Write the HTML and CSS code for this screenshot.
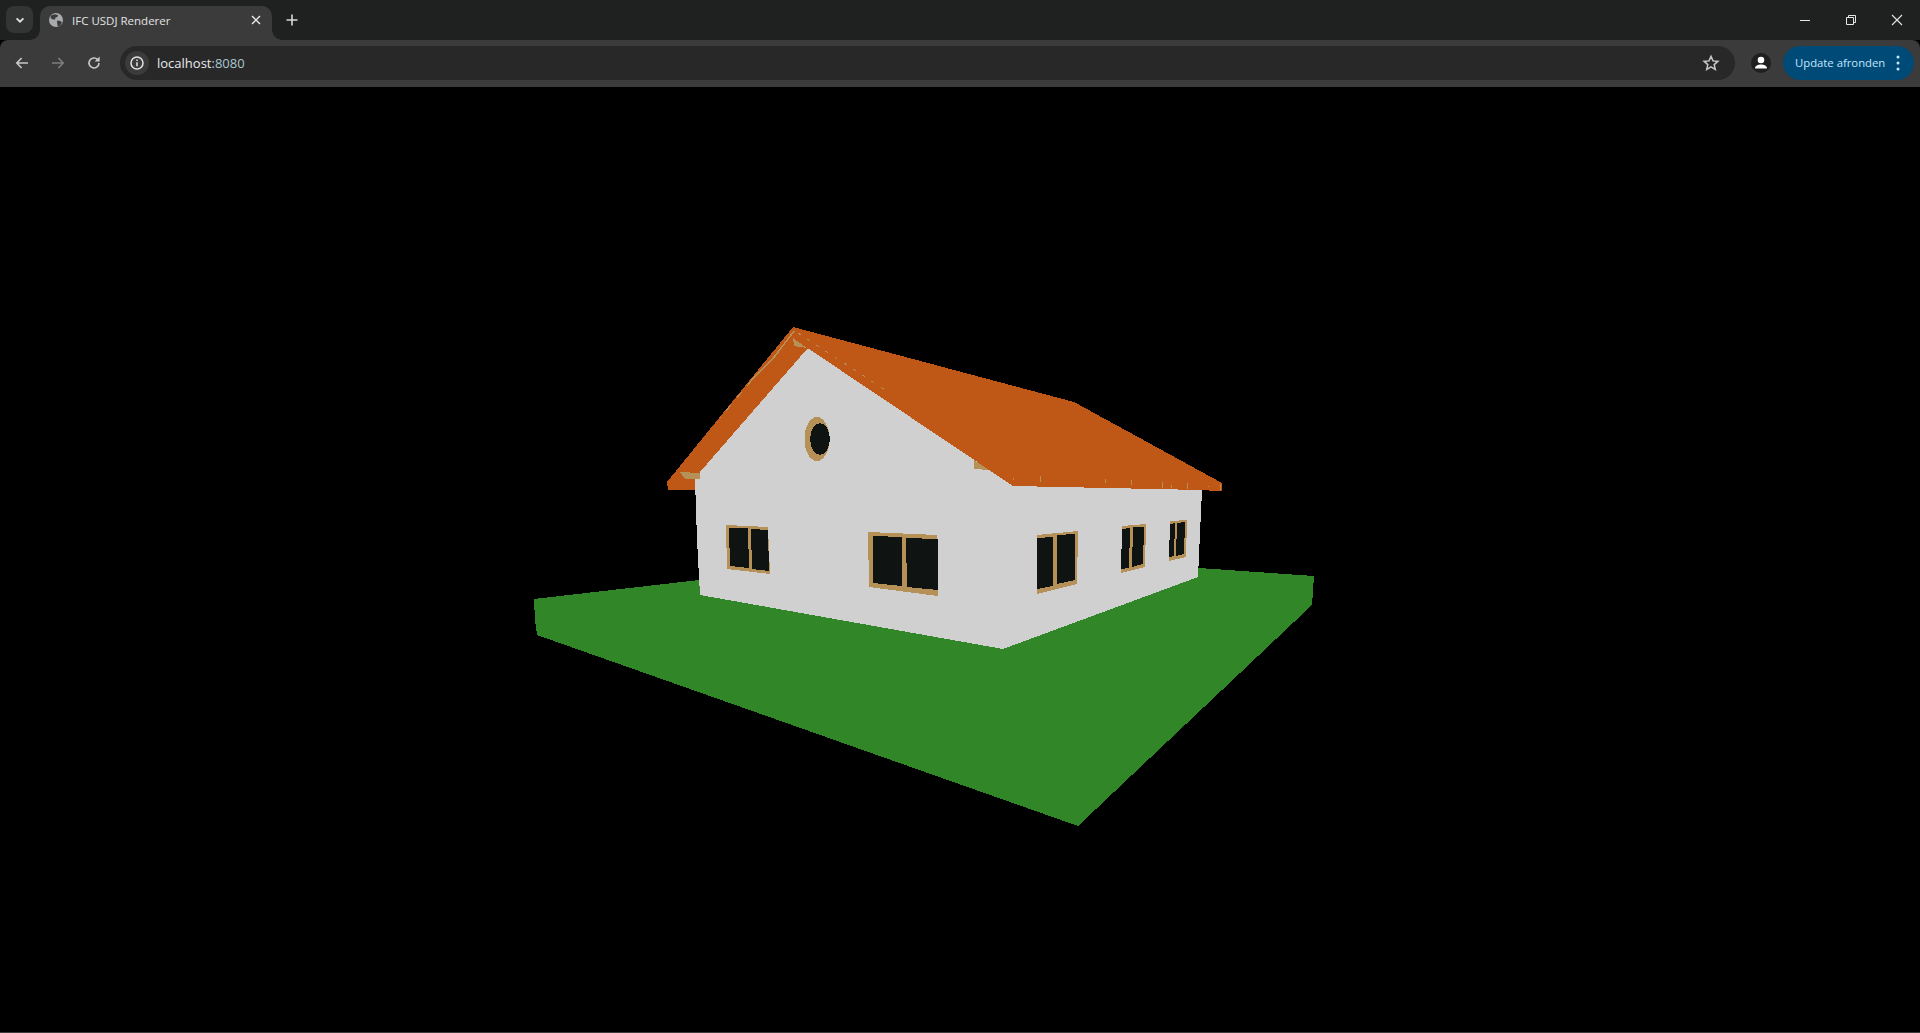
FILE: index.html
```html
<!DOCTYPE html>
<html lang="en">
<head>
<meta charset="utf-8">
<title>IFC USDJ Renderer</title>
<link rel="stylesheet" href="styles.css">
</head>
<body>
<div class="browser">
  <header class="tabstrip">
    <button class="tab-search" aria-label="Search tabs">
      <svg class="icon" width="16" height="16" viewBox="0 0 16 16"><path d="M4.6 6.3 8 9.7l3.400-3.400" fill="none" stroke="#e3e3e3" stroke-width="1.700"/></svg>
    </button>
    <div class="tab">
      <svg class="favicon" width="16" height="16" viewBox="0 0 16 16"><circle cx="8" cy="8" r="7" fill="#a8abad"/><path d="M3 3.500 6.500 2.200 10 3 9.400 5 7.500 5.500 7 7.400 4.800 7.600 2.500 6ZM9 8.500l3.400.6 1.600 1.400-2 3.200-2.200.9-.6-3Z" fill="#3b3b3b"/></svg>
      <span class="tab-title">IFC USDJ Renderer</span>
      <svg class="tab-close" width="16" height="16" viewBox="0 0 16 16"><path d="M4 4l8 8M12 4l-8 8" stroke="#e3e3e3" stroke-width="1.500" fill="none"/></svg>
    </div>
    <svg class="new-tab" width="16" height="16" viewBox="0 0 16 16"><path d="M8 2.500v11M2.500 8h11" stroke="#d8d8d8" stroke-width="1.600" fill="none"/></svg>
    <div class="window-controls">
      <svg width="12" height="12" viewBox="0 0 12 12"><path d="M1 6.500h10" stroke="#e6e6e6" stroke-width="1" fill="none"/></svg>
      <svg width="12" height="12" viewBox="0 0 12 12"><path d="M1.500 3.500h7v7h-7zM3.500 3.500V1.500h7v7h-2" stroke="#e6e6e6" stroke-width="1" fill="none"/></svg>
      <svg width="12" height="12" viewBox="0 0 12 12"><path d="M1 1l10 10M11 1 1 11" stroke="#e6e6e6" stroke-width="1.100" fill="none"/></svg>
    </div>
  </header>
  <nav class="toolbar">
    <svg class="nav" width="16" height="16" viewBox="0 0 16 16"><path d="M14 8H3M7.600 3 2.800 8l4.800 5" stroke="#c7c7c7" stroke-width="1.600" fill="none"/></svg>
    <svg class="nav" width="16" height="16" viewBox="0 0 16 16"><path d="M2 8h11M8.400 3l4.800 5-4.800 5" stroke="#7e7e7e" stroke-width="1.600" fill="none"/></svg>
    <svg class="nav" width="16" height="16" viewBox="0 0 16 16"><path d="M13 8a5 5 0 1 1-1.500-3.600L13 6" stroke="#c7c7c7" stroke-width="1.600" fill="none"/><path d="M13.600 1.600V6.600H8.600Z" fill="#c7c7c7"/></svg>
    <div class="omnibox">
      <span class="info-chip">
        <svg width="16" height="16" viewBox="0 0 16 16"><circle cx="8" cy="8" r="6" fill="none" stroke="#e3e3e3" stroke-width="1.500"/><path d="M8 7.200v4M8 4.400v1.600" stroke="#e3e3e3" stroke-width="1.500" fill="none"/></svg>
      </span>
      <span class="url">localhost<span class="url-port">:8080</span></span>
      <svg class="star" width="18" height="18" viewBox="0 0 18 18"><path d="M9 2.400l2 4.500 4.900.5-3.700 3.200 1.100 4.800L9 12.900l-4.300 2.500 1.100-4.800L2.100 7.400 7 6.900Z" fill="none" stroke="#c7c7c7" stroke-width="1.500"/></svg>
    </div>
    <span class="profile">
      <svg width="20" height="20" viewBox="0 0 20 20"><circle cx="10" cy="7" r="3.300" fill="#fff"/><path d="M4 15.500c0-2.800 3-4 6-4s6 1.200 6 4z" fill="#fff"/></svg>
    </span>
    <div class="update">
      <span class="update-label">Update afronden</span>
      <svg width="4" height="16" viewBox="0 0 4 16"><circle cx="2" cy="2" r="1.500" fill="#c2e7ff"/><circle cx="2" cy="8" r="1.500" fill="#c2e7ff"/><circle cx="2" cy="14" r="1.500" fill="#c2e7ff"/></svg>
    </div>
  </nav>
  <main class="viewport">
    <svg class="scene" viewBox="0 87 1920 946" width="1920" height="946" shape-rendering="crispEdges">
      <polygon class="grass" points="534,599 699,580 1199,568 1314,576 1312,605 1078,826 537,635 535,620"/>
      <polygon class="wall" points="695,480 695,470 795,345 809,349 1013,486 1202,490 1198,577 1003,649 700,595 697,540"/>
      <polygon class="roof" points="793,327 1074,402 1222,483 1222,491 1215,491 1202,490 1013,486 809,349 807,349 700,472 695,480 695,490 668,490 667,482"/>
      <polygon class="trim" points="680,472 700,473 700,479 685,479"/>
      <polygon class="trim" points="793,338 807,348 794,346"/>
      <polygon class="trim" points="974,460 989,470 974,469"/>
      <polyline class="dash dash-solid" points="794,331 775,356 752,380"/>
      <polyline class="dash dash-rake" points="752,380 720,418"/>
      <polyline class="dash dash-ridge" points="798,333 890,393"/>
      <path class="tick" d="M1013,478v2M1040,476v6M1105,479v4M1131,480v5M1162,482v6M1171,485v3M1187,483v6M1208,486v1M1220,484v6"/>
      <ellipse class="trim" cx="817" cy="439" rx="12.500" ry="22"/>
      <ellipse class="glass" cx="820" cy="439" rx="9.700" ry="15.700"/>
      <polygon class="trim" points="726,525 768,527 770,574 727,569"/>
      <polygon class="glass" points="729,528 748,528 749,568 730,566"/>
      <polygon class="glass" points="751,529 768,530 769,571 752,569"/>
      <polygon class="trim" points="868,532 937,535 938,596 869,587"/>
      <polygon class="glass" points="873,536 902,537 902,586 873,583"/>
      <polygon class="glass" points="906,538 938,539 938,590 907,587"/>
      <polygon class="trim" points="1037,535 1078,531 1077,584 1037,594"/>
      <polygon class="glass" points="1037,538 1053,537 1053,586 1037,589"/>
      <polygon class="glass" points="1057,535 1075,534 1075,580 1057,584"/>
      <polygon class="trim" points="1122,526 1146,524 1145,567 1121,573"/>
      <polygon class="glass" points="1122,529 1130,528 1129,568 1121,569"/>
      <polygon class="glass" points="1133,527 1144,527 1143,564 1132,567"/>
      <polygon class="trim" points="1170,521 1187,520 1186,557 1169,561"/>
      <polygon class="glass" points="1170,524 1175,523 1174,556 1169,557"/>
      <polygon class="glass" points="1177,523 1185,522 1184,554 1176,556"/>
    </svg>
  </main>
</div>
</body>
</html>
```
FILE: styles.css
```css
* { box-sizing: border-box; }
html, body { margin: 0; height: 100%; background: #000; overflow: hidden; }
body { font-family: "Open Sans", "Noto Sans", "Liberation Sans", sans-serif; }
.browser { display: flex; flex-direction: column; height: 1033px; }

.tabstrip { display: flex; align-items: flex-end; height: 40px; background: #1f2120; padding-left: 6px; flex: none; }
.tab-search { width: 27px; height: 27px; margin: 0 7px 7px 0; padding: 0; border: 0; border-radius: 8px; background: #333534; display: flex; align-items: center; justify-content: center; }
.tab { position: relative; display: flex; align-items: center; width: 232px; height: 34px; padding: 0 8px 6px 8px; background: #3b3b3b; border-radius: 10px 10px 0 0; color: #e3e3e3; font-size: 11.500px; }
.tab::before, .tab::after { content: ""; position: absolute; bottom: 0; width: 10px; height: 10px; }
.tab::before { left: -10px; background: radial-gradient(circle at 0 0, #1f2120 9.500px, #3b3b3b 10px); }
.tab::after { right: -10px; background: radial-gradient(circle at 100% 0, #1f2120 9.500px, #3b3b3b 10px); }
.favicon { flex: none; margin-right: 8px; }
.tab-title { flex: 1; white-space: nowrap; }
.tab-close { flex: none; }
.new-tab { margin: 0 0 12px 12px; flex: none; }
.window-controls { margin-left: auto; display: flex; gap: 34px; padding: 0 17px 0 0; height: 40px; align-items: center; }

.toolbar { display: flex; align-items: center; height: 47px; background: #3b3b3b; border-radius: 8px 8px 0 0; padding: 0 6px 1px 14px; flex: none; }
.nav { flex: none; margin-right: 20px; }
.nav:nth-child(3) { margin-right: 18px; }
.omnibox { display: flex; align-items: center; flex: none; width: 1615px; height: 34px; border-radius: 17px; background: #282828; padding: 0 15px 0 5px; }
.info-chip { display: flex; align-items: center; justify-content: center; width: 24px; height: 24px; border-radius: 50%; background: #3b3b3b; flex: none; }
.url { margin-left: 8px; font-size: 13px; color: #e8eaed; flex: 1; }
.url-port { color: #a8c7d0; }
.star { flex: none; }
.profile { display: flex; align-items: center; justify-content: center; width: 20px; height: 20px; margin-left: 16px; border-radius: 50%; background: #1f1f1f; flex: none; }
.update { display: flex; align-items: center; justify-content: space-between; width: 131px; height: 34px; margin-left: 12px; padding: 0 14px 0 12px; border-radius: 17px; background: #004a77; color: #c2e7ff; font-size: 11.300px; flex: none; }
.update-label { white-space: nowrap; padding-bottom: 1px; }

.viewport { flex: 1; background: #000; overflow: hidden; border-bottom: 1px solid #3b3b3b; min-height: 0; }
.scene { display: block; }
.grass { fill: #318728; }
.wall { fill: #d0d0d0; }
.roof { fill: #bf5816; }
.trim { fill: #b59158; }
.glass { fill: #0f1312; }
.dash { fill: none; stroke: #b59158; stroke-width: 1; }
.dash-solid { stroke-width: 1.500; }
.dash-rake { stroke-dasharray: 8 8; }
.dash-ridge { stroke-dasharray: 3 8; }
.tick { fill: none; stroke: #b59158; stroke-width: 1; }
```
